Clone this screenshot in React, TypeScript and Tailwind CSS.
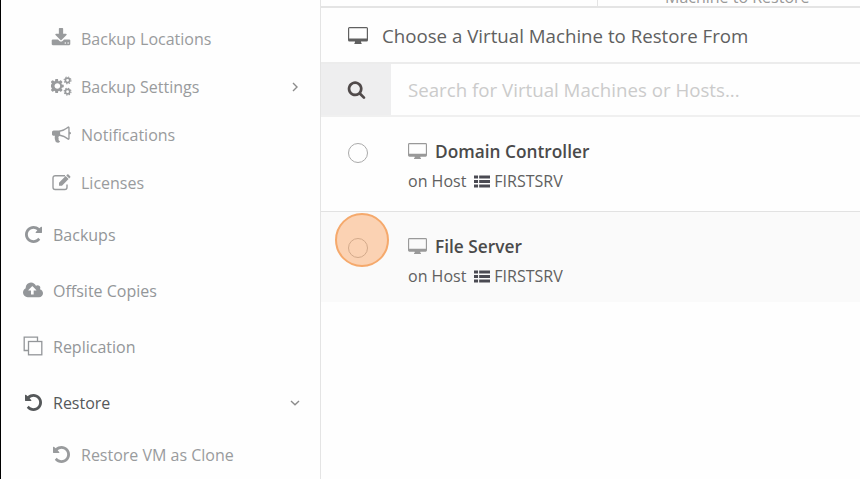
import type { ReactNode } from "react";

const UNDO =
  "M1536 640q0 -156 -61 -298t-164 -245t-245 -164t-298 -61q-172 0 -327 72.5t-264 204.5q-7 10 -6.5 22.5t8.5 20.5l137 138q10 9 25 9q16 -2 23 -12q73 -95 179 -147t225 -52q104 0 198.5 40.5t163.5 109.5t109.5 163.5t40.5 198.5t-40.5 198.5t-109.5 163.5t-163.5 109.5t-198.5 40.5q-98 0 -188 -35.5t-160 -101.5l137 -138q31 -30 14 -69q-17 -40 -59 -40h-448q-26 0 -45 19t-19 45v448q0 42 40 59q39 17 69 -14l130 -129q107 101 244.5 156.5t284.5 55.5q156 0 298 -61t245 -164t164 -245t61 -298z";

function UndoIcon() {
  return (
    <svg width="17" height="17" viewBox="0 -1408 1536 1536" fill="currentColor">
      <path transform="scale(1 -1)" d={UNDO} />
    </svg>
  );
}

function RepeatIcon() {
  return (
    <svg width="17" height="17" viewBox="0 -1408 1536 1536" fill="currentColor">
      <path transform="translate(1536 0) scale(-1 -1)" d={UNDO} />
    </svg>
  );
}

function DownloadIcon() {
  return (
    <svg width="20" height="20" viewBox="0 0 1792 1792" fill="currentColor">
      <path d="M1344 1344q0-26-19-45t-45-19-45 19-19 45 19 45 45 19 45-19 19-45zm256 0q0-26-19-45t-45-19-45 19-19 45 19 45 45 19 45-19 19-45zm128-224v320q0 40-28 68t-68 28h-1472q-40 0-68-28t-28-68v-320q0-40 28-68t68-28h465l135 136q58 56 136 56t136-56l136-136h464q40 0 68 28t28 68zm-325-569q17 41-14 70l-448 448q-18 19-45 19t-45-19l-448-448q-31-29-14-70 17-39 59-39h256v-448q0-26 19-45t45-19h256q26 0 45 19t19 45v448h256q42 0 59 39z" />
    </svg>
  );
}

function SmallGear({ y }: { y: number }) {
  return (
    <g fill="none" stroke="currentColor">
      <circle cx="1500" cy={y} r="200" strokeWidth="150" />
      <circle cx="1500" cy={y} r="310" strokeWidth="100" strokeDasharray="122 121.500" />
    </g>
  );
}

function CogsIcon() {
  return (
    <svg width="21" height="20" viewBox="0 0 1900 1792" fill="currentColor">
      <path d="M832 896q0-106-75-181t-181-75-181 75-75 181 75 181 181 75 181-75 75-181zM1152 805v185q0 10-7 19.500t-16 10.500l-155 24q-11 35-32 76 34 48 90 115 7 11 7 20 0 12-7 19-23 30-82.500 89.500t-78.500 59.500q-11 0-21-7l-115-90q-37 19-77 31-11 108-23 155-7 24-30 24h-186q-11 0-20-7.500t-10-17.500l-23-153q-34-10-75-31l-118 89q-7 7-20 7-11 0-21-8-144-133-144-160 0-9 7-19 10-14 41-53t47-61q-23-44-35-82l-152-24q-10-1-17-9.500t-7-19.500v-185q0-10 7-19.500t16-10.500l155-24q11-35 32-76-34-48-90-115-7-11-7-20 0-12 7-20 22-30 82-89t79-59q11 0 21 7l115 90q34-18 77-32 11-108 23-154 7-24 30-24h186q11 0 20 7.500t10 17.500l23 153q34 10 75 31l118-89q8-7 20-7 11 0 21 8 144 133 144 160 0 8-7 19-12 16-42 54t-45 60q23 48 34 82l152 23q10 2 17 10.500t7 19.500z" fillRule="evenodd" />
      <SmallGear y={384} />
      <SmallGear y={1408} />
    </svg>
  );
}

function BullhornIcon() {
  return (
    <svg width="19" height="19" viewBox="0 0 1792 1792" fill="currentColor">
      <path d="M1664 640q53 0 90.500 37.500t37.500 90.500-37.500 90.500-90.500 37.500v384q0 52-38 90t-90 38q-417-347-812-380-58 19-91 66t-31 100.500 40 92.500q-20 33-23 65.500t6 58 33.500 55 48 50 61.500 50.500q-29 58-111.500 83t-168.500 11.500-132-55.500q-7-23-29.500-87.500t-32-94.500-23-89-15-101 3.500-98.500 22-110.500h-122q-66 0-113-47t-47-113v-192q0-66 47-113t113-47h480q435 0 896-384 52 0 90 38t38 90v384zm-128 604v-954q-394 302-768 343v270q377 42 768 341z" />
    </svg>
  );
}

function EditIcon() {
  return (
    <svg width="19" height="17" viewBox="0 0 19 17" fill="none" stroke="currentColor">
      <path d="M13 1.700H3.200A2.200 2.200 0 0 0 1 3.900v9.400a2.200 2.200 0 0 0 2.200 2.200h9.600a2.200 2.200 0 0 0 2.200-2.200V10.500" strokeWidth="1.400" />
      <path d="M7 8.700L13.600 2.100l3 3L10 11.700H7zM14.300 1.400l.8-.8a1 1 0 0 1 1.400 0l1.600 1.600a1 1 0 0 1 0 1.400l-.8.8z" fill="currentColor" stroke="none" />
    </svg>
  );
}

function CloudUploadIcon() {
  return (
    <svg width="20" height="19" viewBox="0 0 1920 1792" fill="currentColor">
      <path d="M1280 864q0-14-9-23l-352-352q-9-9-23-9t-23 9l-351 351q-10 12-10 24 0 14 9 23t23 9h224v352q0 13 9.500 22.500t22.500 9.500h192q13 0 22.500-9.500t9.500-22.500v-352h224q13 0 22.500-9.500t9.500-22.500zm640 288q0 159-112.500 271.500t-271.500 112.500h-1088q-185 0-316.500-131.500t-131.500-316.500q0-130 70-240t188-165q-2-30-2-43 0-212 150-362t362-150q156 0 285.500 87t188.500 231q71-62 166-62 106 0 181 75t75 181q0 76-41 138 130 31 213.500 135.500t83.500 238.500z" />
    </svg>
  );
}

function CopyIcon() {
  return (
    <svg width="20" height="20" viewBox="0 0 20 20" fill="none" stroke="currentColor" strokeWidth="1.300">
      <path d="M5 14.500H1.200V1.200H14.500V5" />
      <rect x="5.500" y="5.500" width="13.300" height="13.300" />
    </svg>
  );
}

function SearchIcon() {
  return (
    <svg width="19" height="19" viewBox="0 0 1792 1792" fill="currentColor">
      <path d="M1216 832q0-185-131.500-316.500t-316.500-131.500-316.500 131.500-131.500 316.500 131.500 316.500 316.500 131.500 316.500-131.500 131.500-316.500zm512 832q0 52-38 90t-90 38q-54 0-90-38l-343-342q-179 124-399 124-143 0-273.500-55.500t-225-150-150-225-55.500-273.500 55.500-273.500 150-225 225-150 273.500-55.500 273.500 55.500 225 150 150 225 55.500 273.500q0 220-124 399l343 343q37 37 37 90z" />
    </svg>
  );
}

function MonitorIcon({ size }: { size: number }) {
  return (
    <svg width={size} height={size * 0.85} viewBox="0 0 20 17" fill="currentColor">
      <path
        fillRule="evenodd"
        d="M1.500 0h17A1.500 1.500 0 0 1 20 1.500v11.500a1.500 1.500 0 0 1-1.500 1.500H13v1.300h.6V17H6.400v-1.200H7V14.500H1.500A1.500 1.500 0 0 1 0 13v-11.500A1.500 1.500 0 0 1 1.500 0zM1.200 1.200v10.200h17.600V1.200z"
      />
    </svg>
  );
}

function HostIcon() {
  return (
    <svg className="ml-[8px] mr-[4px]" width="16" height="13" viewBox="0 0 17 13" fill="#4a4a52">
      <path d="M0 0h4.300v3.400H0zM5.500 0H17v3.400H5.500zM0 4.800h4.300v3.400H0zM5.500 4.800H17v3.400H5.500zM0 9.600h4.300V13H0zM5.500 9.600H17V13H5.500z" />
    </svg>
  );
}

function Chevron({ down = false }: { down?: boolean }) {
  return (
    <svg className="mr-[19px] mt-[2px]" width="12" height="12" viewBox="0 0 12 12" fill="none" stroke="#8c8c8c" strokeWidth="1.400">
      <path d={down ? "M2 4l4 3.800L10 4" : "M4 2l4 4-4 4"} />
    </svg>
  );
}

type ItemProps = { icon: ReactNode; label: string; trailing?: ReactNode; active?: boolean };

function SubItem({ icon, label, trailing }: ItemProps) {
  return (
    <li className="flex h-12 shrink-0 items-center pl-[49px] text-[#999b9d]">
      <span className="flex w-[22px] shrink-0 justify-center">{icon}</span>
      <span className="ml-[9px] flex-1 pt-[2px] text-base">{label}</span>
      {trailing}
    </li>
  );
}

function MainItem({ icon, label, trailing, active }: ItemProps) {
  return (
    <li className={`flex h-14 shrink-0 items-center pl-[21px] ${active ? "text-[#55585a]" : "text-[#939699]"}`}>
      <span className="flex w-[22px] shrink-0 justify-center">{icon}</span>
      <span className="ml-[9px] flex-1 pt-[2px] text-base">{label}</span>
      {trailing}
    </li>
  );
}

function Machine({ name, highlighted = false }: { name: string; highlighted?: boolean }) {
  return (
    <div className={`flex pl-[27px] ${highlighted ? "h-[90px] bg-[#fafafa]" : "h-[95px] border-b border-[#e2e2e2]"}`}>
      <div className="relative mt-[26px] size-5 rounded-full border border-[#aaa]">
        {highlighted && (
          <span className="absolute -left-[14.500px] -top-[26.500px] size-[54px] rounded-full border-2 border-[#f5a96c] bg-[#fbaa6c]/50" />
        )}
      </div>
      <div className="ml-10 mt-[20px]">
        <div className="flex h-7 items-center text-[17.300px] font-semibold text-[#4a4a4a]">
          <span className="mr-2 text-[#999]"><MonitorIcon size={19} /></span>
          <span className="pt-[2px]">{name}</span>
        </div>
        <div className="mt-[2px] flex h-7 items-center text-base text-[#606060]">
          on Host
          <HostIcon />
          FIRSTSRV
        </div>
      </div>
    </div>
  );
}

export default function App() {
  return (
    <div className="flex h-[479px] w-[860px] overflow-hidden border-l border-black bg-[#fefefe] font-['Open_Sans',sans-serif]">
      <aside className="w-80 shrink-0 border-r border-[#e4e4e4]">
        <ul className="flex flex-col pt-[14px]">
          <SubItem icon={<DownloadIcon />} label="Backup Locations" />
          <SubItem icon={<CogsIcon />} label="Backup Settings" trailing={<Chevron />} />
          <SubItem icon={<BullhornIcon />} label="Notifications" />
          <SubItem icon={<EditIcon />} label="Licenses" />
          <MainItem icon={<RepeatIcon />} label="Backups" />
          <MainItem icon={<CloudUploadIcon />} label="Offsite Copies" />
          <MainItem icon={<CopyIcon />} label="Replication" />
          <MainItem icon={<UndoIcon />} label="Restore" trailing={<Chevron down />} active />
          <SubItem icon={<UndoIcon />} label="Restore VM as Clone" />
        </ul>
      </aside>
      <main className="flex-1">
        <div className="flex h-2 items-end overflow-hidden border-b-2 border-[#e4e4e4]">
          <div className="h-full w-[277px] border-r border-[#e4e4e4]" />
          <div className="mb-[-1px] ml-[67px] text-base leading-5 text-[#999]">Machine to Restore</div>
        </div>
        <h1 className="flex h-14 items-center border-b-2 border-[#ececec] pl-[27px] text-[18.700px] text-[#606060]">
          <MonitorIcon size={20} />
          <span className="ml-[14px] pt-[2px]">Choose a Virtual Machine to Restore From</span>
        </h1>
        <div className="flex h-[53px] border-b-2 border-[#f0f0f0]">
          <div className="flex w-[70px] items-center bg-[#eeeeef] pl-[26px] text-[#504a4a]">
            <SearchIcon />
          </div>
          <div className="flex items-center pl-[17px] pt-[2px] text-[18.700px] text-[#cbcbcb]">
            Search for Virtual Machines or Hosts...
          </div>
        </div>
        <Machine name="Domain Controller" />
        <Machine name="File Server" highlighted />
      </main>
    </div>
  );
}
